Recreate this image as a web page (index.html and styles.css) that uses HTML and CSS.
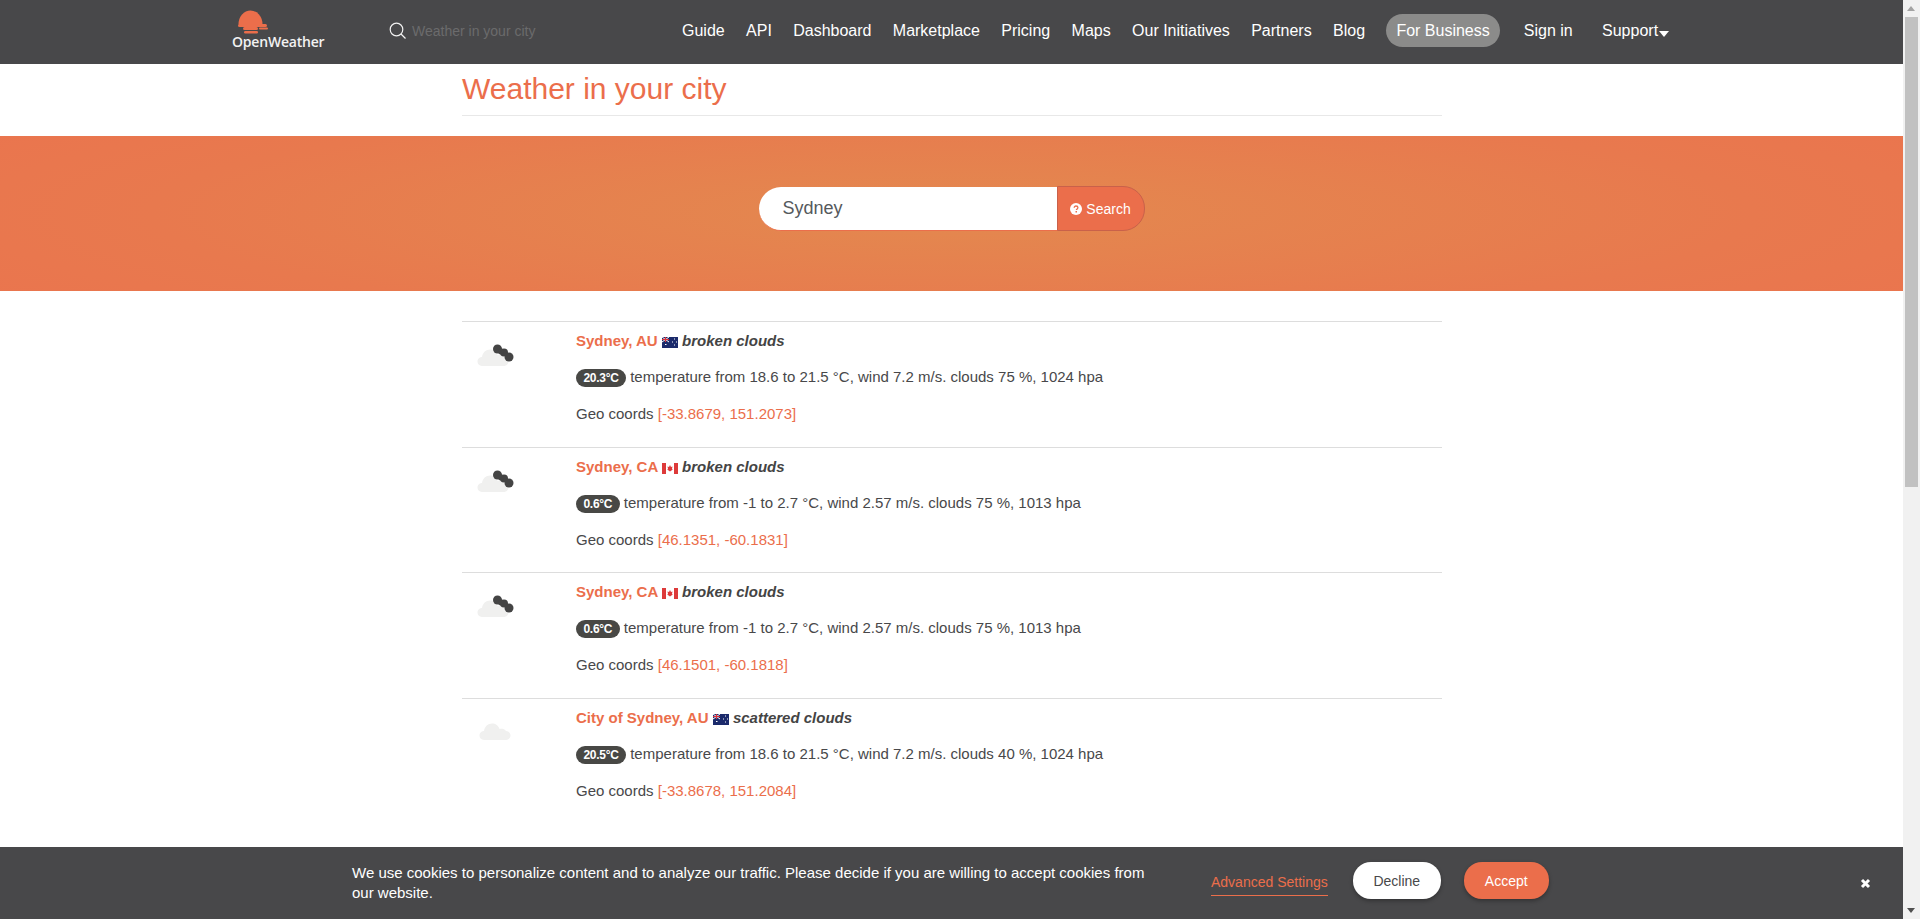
FILE: index.html
```html
<!DOCTYPE html>
<html lang="en">
<head>
    <meta charset="UTF-8">
    <title>Weather in your city - OpenWeather</title>
    <link rel="stylesheet" href="styles.css">
</head>
<body>
<div class="window">
    <div class="page">
        <!-- Top navigation -->
        <nav class="topbar">
            <a class="logo" href="#">
                <svg class="logo-sun" width="32" height="24" viewBox="0 0 32 24">
                    <path fill="#eb6e4b" d="M1.500 14.500A12 14 0 0 1 25.500 14.500z"/>
                    <rect fill="#eb6e4b" x="1" y="14" width="29" height="3" rx="1.500"/>
                    <rect fill="#eb6e4b" x="6" y="17" width="15" height="3" rx="1.500"/>
                    <rect fill="#eb6e4b" x="22" y="17.500" width="9" height="2" rx="1"/>
                    <rect fill="#eb6e4b" x="7" y="21" width="14" height="2.500" rx="1.200"/>
                </svg>
                <span class="logo-text">OpenWeather</span>
            </a>
            <div class="nav-search">
                <svg width="17" height="17" viewBox="0 0 17 17" fill="none" stroke="#f2f2f2" stroke-width="1.200">
                    <circle cx="7.500" cy="7.500" r="6.300"/>
                    <path d="M12 12l4.500 4.500"/>
                </svg>
                <span class="nav-placeholder">Weather in your city</span>
            </div>
            <ul class="nav-links">
                <li><a href="#">Guide</a></li>
                <li><a href="#">API</a></li>
                <li><a href="#">Dashboard</a></li>
                <li><a href="#">Marketplace</a></li>
                <li><a href="#">Pricing</a></li>
                <li><a href="#">Maps</a></li>
                <li><a href="#">Our Initiatives</a></li>
                <li><a href="#">Partners</a></li>
                <li><a href="#">Blog</a></li>
                <li><a class="pill" href="#">For Business</a></li>
                <li class="signin"><a href="#">Sign in</a></li>
                <li class="support"><a href="#">Support<span class="caret"></span></a></li>
            </ul>
        </nav>

        <div class="container">
            <h1>Weather in your city</h1>
        </div>

        <!-- Search band -->
        <section class="hero">
            <form class="search-form">
                <input class="search-input" type="text" value="Sydney">
                <button class="search-btn" type="button">
                    <svg width="12" height="12" viewBox="0 0 12 12">
                        <circle cx="6" cy="6" r="6" fill="#fff"/>
                        <path d="M4.200 4.700C4.200 3.600 5 3 6 3s1.900.6 1.900 1.600c0 1.300-1.500 1.300-1.500 2.500" fill="none" stroke="#eb6e4b" stroke-width="1.300"/>
                        <rect x="5.500" y="8" width="1.500" height="1.500" fill="#eb6e4b"/>
                    </svg>
                    Search
                </button>
            </form>
        </section>

        <!-- Results -->
        <div class="container results">
            <div class="row">
                <svg class="icon" width="40" height="26" viewBox="0 0 40 26">
                    <use href="#cloud"/>
                    <use href="#dark-clump"/>
                </svg>
                <div class="info">
                    <p class="title"><a href="#">Sydney, AU</a> <svg class="flag" width="16" height="11"><use href="#flag-au"/></svg> <i>broken clouds</i></p>
                    <p class="line"><span class="badge">20.3°C</span> temperature from 18.6 to 21.5 °C, wind 7.2 m/s. clouds 75 %, 1024 hpa</p>
                    <p class="line">Geo coords <a href="#">[-33.8679, 151.2073]</a></p>
                </div>
            </div>
            <div class="row">
                <svg class="icon" width="40" height="26" viewBox="0 0 40 26">
                    <use href="#cloud"/>
                    <use href="#dark-clump"/>
                </svg>
                <div class="info">
                    <p class="title"><a href="#">Sydney, CA</a> <svg class="flag" width="16" height="11"><use href="#flag-ca"/></svg> <i>broken clouds</i></p>
                    <p class="line"><span class="badge">0.6°C</span> temperature from -1 to 2.7 °C, wind 2.57 m/s. clouds 75 %, 1013 hpa</p>
                    <p class="line">Geo coords <a href="#">[46.1351, -60.1831]</a></p>
                </div>
            </div>
            <div class="row">
                <svg class="icon" width="40" height="26" viewBox="0 0 40 26">
                    <use href="#cloud"/>
                    <use href="#dark-clump"/>
                </svg>
                <div class="info">
                    <p class="title"><a href="#">Sydney, CA</a> <svg class="flag" width="16" height="11"><use href="#flag-ca"/></svg> <i>broken clouds</i></p>
                    <p class="line"><span class="badge">0.6°C</span> temperature from -1 to 2.7 °C, wind 2.57 m/s. clouds 75 %, 1013 hpa</p>
                    <p class="line">Geo coords <a href="#">[46.1501, -60.1818]</a></p>
                </div>
            </div>
            <div class="row">
                <svg class="icon" width="40" height="26" viewBox="0 0 40 26">
                    <use href="#cloud" x="2" y="-3"/>
                </svg>
                <div class="info">
                    <p class="title"><a href="#">City of Sydney, AU</a> <svg class="flag" width="16" height="11"><use href="#flag-au"/></svg> <i>scattered clouds</i></p>
                    <p class="line"><span class="badge">20.5°C</span> temperature from 18.6 to 21.5 °C, wind 7.2 m/s. clouds 40 %, 1024 hpa</p>
                    <p class="line">Geo coords <a href="#">[-33.8678, 151.2084]</a></p>
                </div>
            </div>
        </div>

        <!-- Cookie bar -->
        <div class="cookie">
            <p class="cookie-text">We use cookies to personalize content and to analyze our traffic. Please decide if you are willing to accept cookies from our website.</p>
            <a class="cookie-settings" href="#">Advanced Settings</a>
            <button class="cookie-decline" type="button">Decline</button>
            <button class="cookie-accept" type="button">Accept</button>
            <svg class="cookie-close" width="11" height="11" viewBox="0 0 11 11">
                <path d="M2 2l7 7M9 2l-7 7" stroke="#fff" stroke-width="3"/>
            </svg>
        </div>
    </div>

    <!-- Scrollbar as it shows in the window -->
    <div class="scrollbar">
        <span class="arrow-up"></span>
        <span class="thumb"></span>
        <span class="arrow-down"></span>
    </div>
</div>

<!-- Shared drawings -->
<svg class="defs" width="0" height="0">
    <defs>
        <g id="cloud">
            <path fill="#f0f0ef" d="M5 24c-3 0-4.500-2.300-4.500-4.500S2.300 15 5 15c.5-4.500 4-7.500 8-7.500 3.500 0 6.500 2 7.500 5.500 1-.5 5-.8 6.500 2 3 .2 4.500 2.300 4.500 4.500S29.500 24 27 24z"/>
        </g>
        <g id="dark-clump" fill="#444">
            <circle cx="20.500" cy="7" r="4.500"/>
            <circle cx="27" cy="10.500" r="4"/>
            <circle cx="32" cy="15" r="4.500"/>
            <circle cx="24" cy="9.500" r="3"/>
        </g>
        <g id="flag-au">
            <rect width="16" height="11" fill="#1b2a6b"/>
            <path d="M0 0l7 5M7 0L0 5" stroke="#fff" stroke-width="1"/>
            <path d="M3.500 0v5M0 2.500h7" stroke="#d8303a" stroke-width="1.200"/>
            <path d="M3 7.500h1.500M12 2h1M12 8h1M10 5h1M14 5h1" stroke="#fff" stroke-width="1.200"/>
        </g>
        <g id="flag-ca">
            <rect width="16" height="11" fill="#fff"/>
            <rect width="4" height="11" fill="#dd3a3a"/>
            <rect x="12" width="4" height="11" fill="#dd3a3a"/>
            <path d="M8 2l1 2 1.500-.5-.5 2.500.8.500L8 8.500 5.200 6.500 6 6l-.5-2.500L7 4z" fill="#dd3a3a"/>
        </g>
    </defs>
</svg>
</body>
</html>
```

FILE: styles.css
```css
* {
    box-sizing: border-box;
}
html, body {
    margin: 0;
    height: 100%;
    overflow: hidden;
}
body {
    font-family: "Liberation Sans", Arial, sans-serif;
    font-size: 14px;
    color: #48484a;
    background: #fff;
}
a {
    text-decoration: none;
    color: #eb6e4b;
}
p {
    margin: 0;
}
.defs {
    display: block;
}
.window {
    display: flex;
    height: 919px;
}
.page {
    flex: 1;
    min-width: 0;
    position: relative;
    overflow: hidden;
}

/* Top navigation */
.topbar {
    display: flex;
    align-items: center;
    height: 64px;
    padding: 0 0 3px 232px;
    background: #48484a;
}
.logo {
    display: flex;
    flex-direction: column;
    width: 93px;
    height: 52px;
}
.logo-sun {
    margin: 5.500px 0 0 5px;
}
.logo-text {
    font-family: "Open Sans", sans-serif;
    font-size: 14px;
    font-weight: 600;
    line-height: 16px;
    letter-spacing: -0.200px;
    white-space: nowrap;
    color: #f2f2f2;
}
.nav-search {
    display: flex;
    align-items: center;
    gap: 6px;
    width: 293px;
    margin-left: 64px;
}
.nav-placeholder {
    color: #6b6b6c;
}
.nav-links {
    display: flex;
    align-items: center;
    gap: 21.350px;
    margin: 0;
    padding: 0;
    list-style: none;
    font-size: 16px;
}
.nav-links a {
    color: #fff;
}
.nav-links .pill {
    display: block;
    padding: 0 10px;
    height: 33px;
    line-height: 33px;
    border-radius: 17px;
    background: #8b8b8a;
}
.signin {
    margin-left: 2.700px;
}
.support {
    margin-left: 8px;
}
.caret {
    display: inline-block;
    margin-left: 1px;
    border-top: 6px solid #fff;
    border-left: 5px solid transparent;
    border-right: 5px solid transparent;
    vertical-align: -1px;
}

/* Page title */
.container {
    width: 980px;
    margin-left: 462px;
}
h1 {
    margin: 0;
    height: 52px;
    border-bottom: 1px solid #e8e8e8;
    font-size: 30px;
    font-weight: 400;
    line-height: 50px;
    color: #eb6e4b;
}

/* Search band */
.hero {
    display: flex;
    justify-content: center;
    height: 155px;
    margin-top: 20px;
    padding-top: 50px;
    background: radial-gradient(ellipse 60% 100% at center, #e3894f 0%, #e8794e 70%, #ea754e 100%);
}
.search-form {
    display: flex;
    height: 45px;
}
.search-input {
    width: 298px;
    height: 44px;
    margin-top: 1px;
    padding: 0 24px;
    border: 0;
    border-bottom: 1px solid #eb6e4b;
    border-radius: 22px 0 0 22px;
    font-family: inherit;
    font-size: 18px;
    color: #55595c;
    background: #fff;
}
.search-btn {
    display: flex;
    align-items: center;
    justify-content: center;
    gap: 4px;
    width: 88px;
    height: 45px;
    padding: 0;
    border: 1px solid #c9614a;
    border-radius: 0 22px 22px 0;
    font-family: inherit;
    font-size: 14px;
    color: #fff;
    background: #eb6e4b;
}

/* Results */
.results {
    margin-top: 30px;
}
.row {
    display: flex;
    height: 125.700px;
    border-top: 1px solid #ddd;
}
.icon {
    width: 40px;
    margin: 20px 0 0 15px;
    flex: none;
}
.info {
    margin-left: 59px;
    padding-top: 11px;
    font-size: 15px;
}
.title {
    height: 34px;
    line-height: 16px;
    font-weight: 700;
    color: #444;
}
.title i {
    font-weight: 700;
}
.flag {
    vertical-align: -2px;
}
.line {
    height: 37px;
    line-height: 19px;
    color: #48484a;
}
.badge {
    display: inline-block;
    height: 18px;
    padding: 0 7.500px;
    border-radius: 9px;
    line-height: 18px;
    font-size: 12px;
    font-weight: 700;
    letter-spacing: -0.300px;
    color: #fff;
    background: #484845;
}

/* Cookie bar */
.cookie {
    position: absolute;
    left: 0;
    right: 0;
    bottom: 0;
    display: flex;
    align-items: center;
    height: 72px;
    padding-left: 352px;
    background: #48484a;
    color: #fff;
}
.cookie-text {
    width: 814px;
    font-size: 15px;
    line-height: 20px;
}
.cookie-settings {
    margin: 4px 0 0 45px;
    padding-bottom: 5px;
    border-bottom: 1px solid #eb6e4b;
}
.cookie-decline, .cookie-accept {
    height: 37px;
    margin-top: -5px;
    border: 0;
    border-radius: 18px;
    font-family: inherit;
    font-size: 14px;
    box-shadow: 0 2px 4px rgba(0, 0, 0, 0.3);
}
.cookie-decline {
    width: 88px;
    margin-left: 25px;
    color: #48484a;
    background: #fff;
}
.cookie-accept {
    width: 85px;
    margin-left: 23px;
    color: #fff;
    background: #eb6e4b;
}
.cookie-close {
    margin-left: 311px;
}

/* Scrollbar */
.scrollbar {
    flex: none;
    position: relative;
    width: 17px;
    background: #f1f1f1;
}
.thumb {
    position: absolute;
    top: 17px;
    left: 2px;
    width: 13px;
    height: 470px;
    background: #c1c1c1;
}
.arrow-up, .arrow-down {
    position: absolute;
    left: 4px;
    border-left: 4px solid transparent;
    border-right: 4px solid transparent;
}
.arrow-up {
    top: 6px;
    border-bottom: 5px solid #a3a3a3;
}
.arrow-down {
    bottom: 6px;
    border-top: 5px solid #505050;
}
```
